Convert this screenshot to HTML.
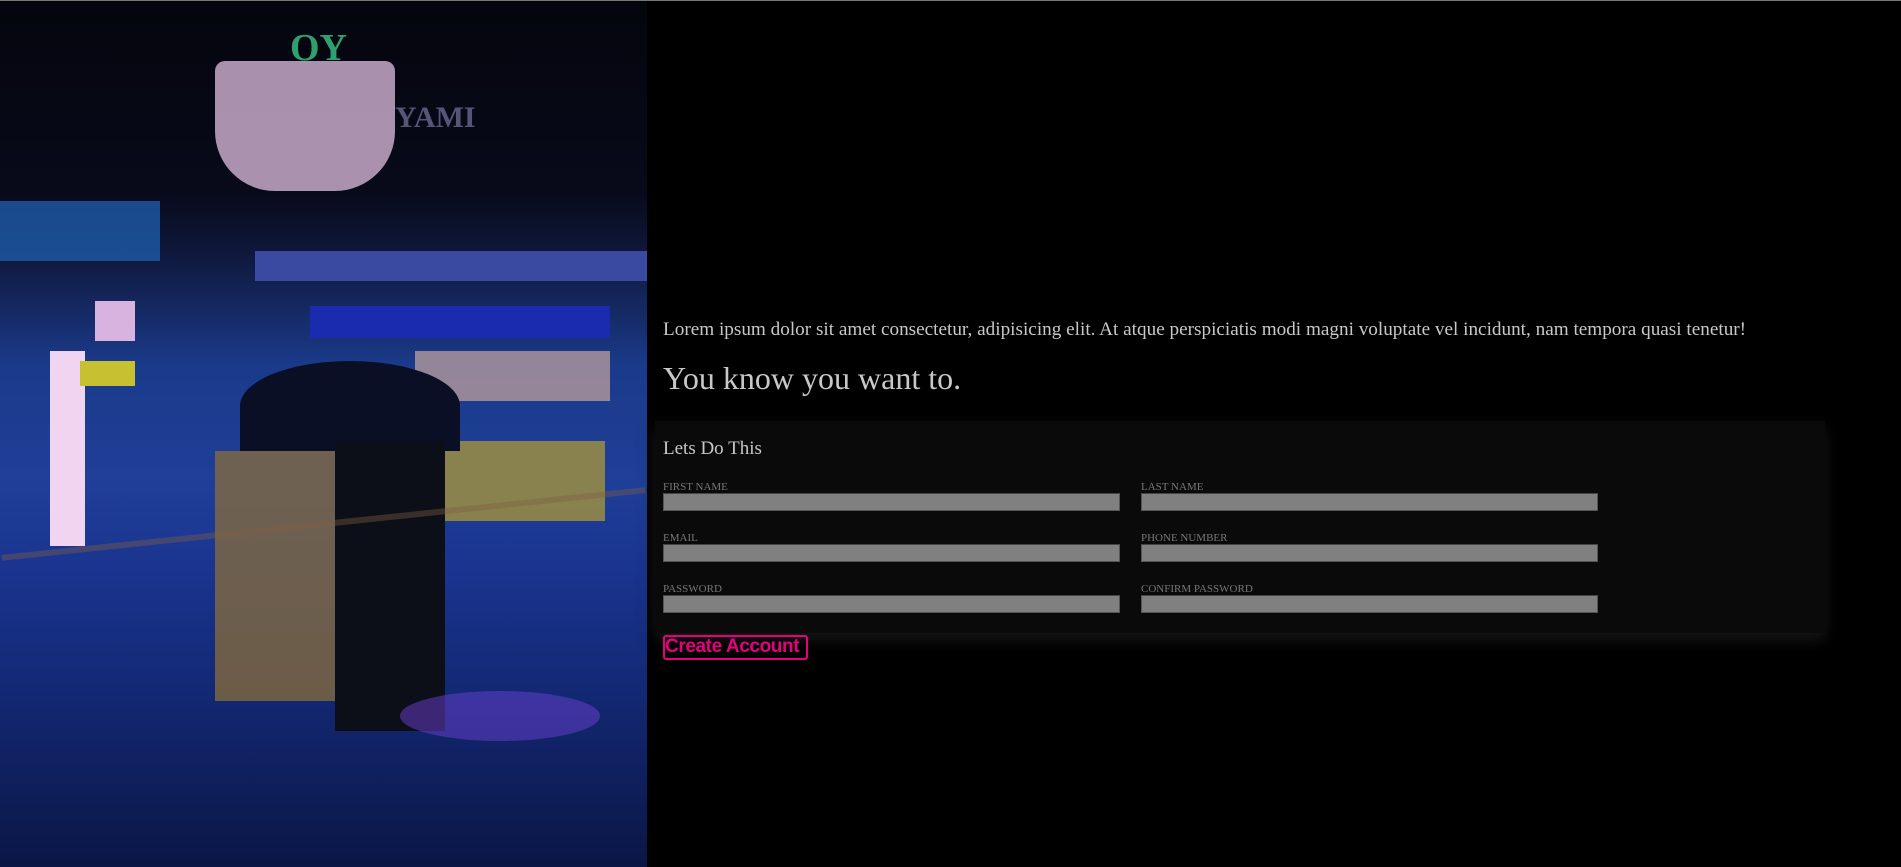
<!DOCTYPE html>
<html><head><meta charset="utf-8"><style>
*{margin:0;padding:0;box-sizing:border-box}
html,body{width:1901px;height:867px;background:#000;overflow:hidden;font-family:"Liberation Serif",serif;color:#ccc}
.top{position:absolute;left:0;top:0;width:1901px;height:1px;background:#777}
.img{position:absolute;left:0;top:1px;width:647px;height:866px;overflow:hidden;
background:linear-gradient(180deg,#04050d 0%,#080a1a 22%,#101a40 30%,#1a3a8a 42%,#1f3f98 55%,#1a3590 65%,#142a78 78%,#0a1645 100%)}
.img div{position:absolute}
.lorem{position:absolute;left:663px;top:319px;font-size:19.2px;color:#c8c8c8;white-space:nowrap}
h1{position:absolute;left:663px;top:360px;font-size:32px;font-weight:normal;color:#c8c8c8;white-space:nowrap}
.box{position:absolute;left:655px;top:421px;width:1170px;height:212px;background:#0a0a0a;box-shadow:0 6px 14px rgba(40,40,40,.6)}
.h2{position:absolute;left:663px;top:438px;font-size:19px;color:#c8c8c8}
.lab{position:absolute;font-size:11px;color:#777;white-space:nowrap}
.inp{position:absolute;width:457px;height:18px;background:#808080;border:1px solid #555;border-top-color:#444}
.btn{position:absolute;left:663px;top:635px;width:145px;height:25px;border:2px solid #e6007e;border-radius:3px;color:#e6007e;font:bold 19px "Liberation Sans",sans-serif;line-height:20px;letter-spacing:-0.4px;white-space:nowrap}
</style></head><body>
<div class="top"></div>
<div class="img">
  <div style="left:215px;top:60px;width:180px;height:130px;border-radius:10px 10px 60px 60px;background:#c7a9c9;opacity:.85"></div>
  <div style="left:290px;top:25px;width:110px;height:35px;color:#2ea070;font:bold 38px 'Liberation Serif',serif">OY</div>
  <div style="left:395px;top:100px;width:160px;height:35px;color:#557;font:bold 30px 'Liberation Serif',serif">YAMI</div>
  <div style="left:255px;top:250px;width:392px;height:30px;background:#3a4aa0"></div>
  <div style="left:310px;top:305px;width:300px;height:32px;background:#1b2bb0"></div>
  <div style="left:415px;top:350px;width:195px;height:50px;background:#c9a7a0;opacity:.7"></div>
  <div style="left:410px;top:440px;width:195px;height:80px;background:#b7a030;opacity:.7"></div>
  <div style="left:0;top:200px;width:160px;height:60px;background:#1e5aa8;opacity:.8"></div>
  <div style="left:95px;top:300px;width:40px;height:40px;background:#d9b3e0"></div>
  <div style="left:50px;top:350px;width:35px;height:195px;background:#f0d4f0"></div>
  <div style="left:80px;top:360px;width:55px;height:25px;background:#c7c030"></div>
  <div style="left:240px;top:360px;width:220px;height:90px;border-radius:50% 50% 0 0;background:#0a0f25"></div>
  <div style="left:215px;top:450px;width:130px;height:250px;background:#8a6e3a;opacity:.75"></div>
  <div style="left:335px;top:440px;width:110px;height:290px;background:#0c0f18"></div>
  <div style="left:400px;top:690px;width:200px;height:50px;background:#6a3fd0;opacity:.5;border-radius:50%"></div>
  <div style="left:0;top:520px;width:647px;height:6px;background:#806040;opacity:.4;transform:rotate(-6deg)"></div>
</div>
<div class="lorem">Lorem ipsum dolor sit amet consectetur, adipisicing elit. At atque perspiciatis modi magni voluptate vel incidunt, nam tempora quasi tenetur!</div>
<h1>You know you want to.</h1>
<div class="box"></div>
<div class="h2">Lets Do This</div>
<div class="lab" style="left:663px;top:481px">FIRST NAME</div>
<div class="lab" style="left:1141px;top:481px">LAST NAME</div>
<div class="inp" style="left:663px;top:493px"></div>
<div class="inp" style="left:1141px;top:493px"></div>
<div class="lab" style="left:663px;top:532px">EMAIL</div>
<div class="lab" style="left:1141px;top:532px">PHONE NUMBER</div>
<div class="inp" style="left:663px;top:544px"></div>
<div class="inp" style="left:1141px;top:544px"></div>
<div class="lab" style="left:663px;top:583px">PASSWORD</div>
<div class="lab" style="left:1141px;top:583px">CONFIRM PASSWORD</div>
<div class="inp" style="left:663px;top:595px"></div>
<div class="inp" style="left:1141px;top:595px"></div>
<div class="btn">Create Account</div>
</body></html>
